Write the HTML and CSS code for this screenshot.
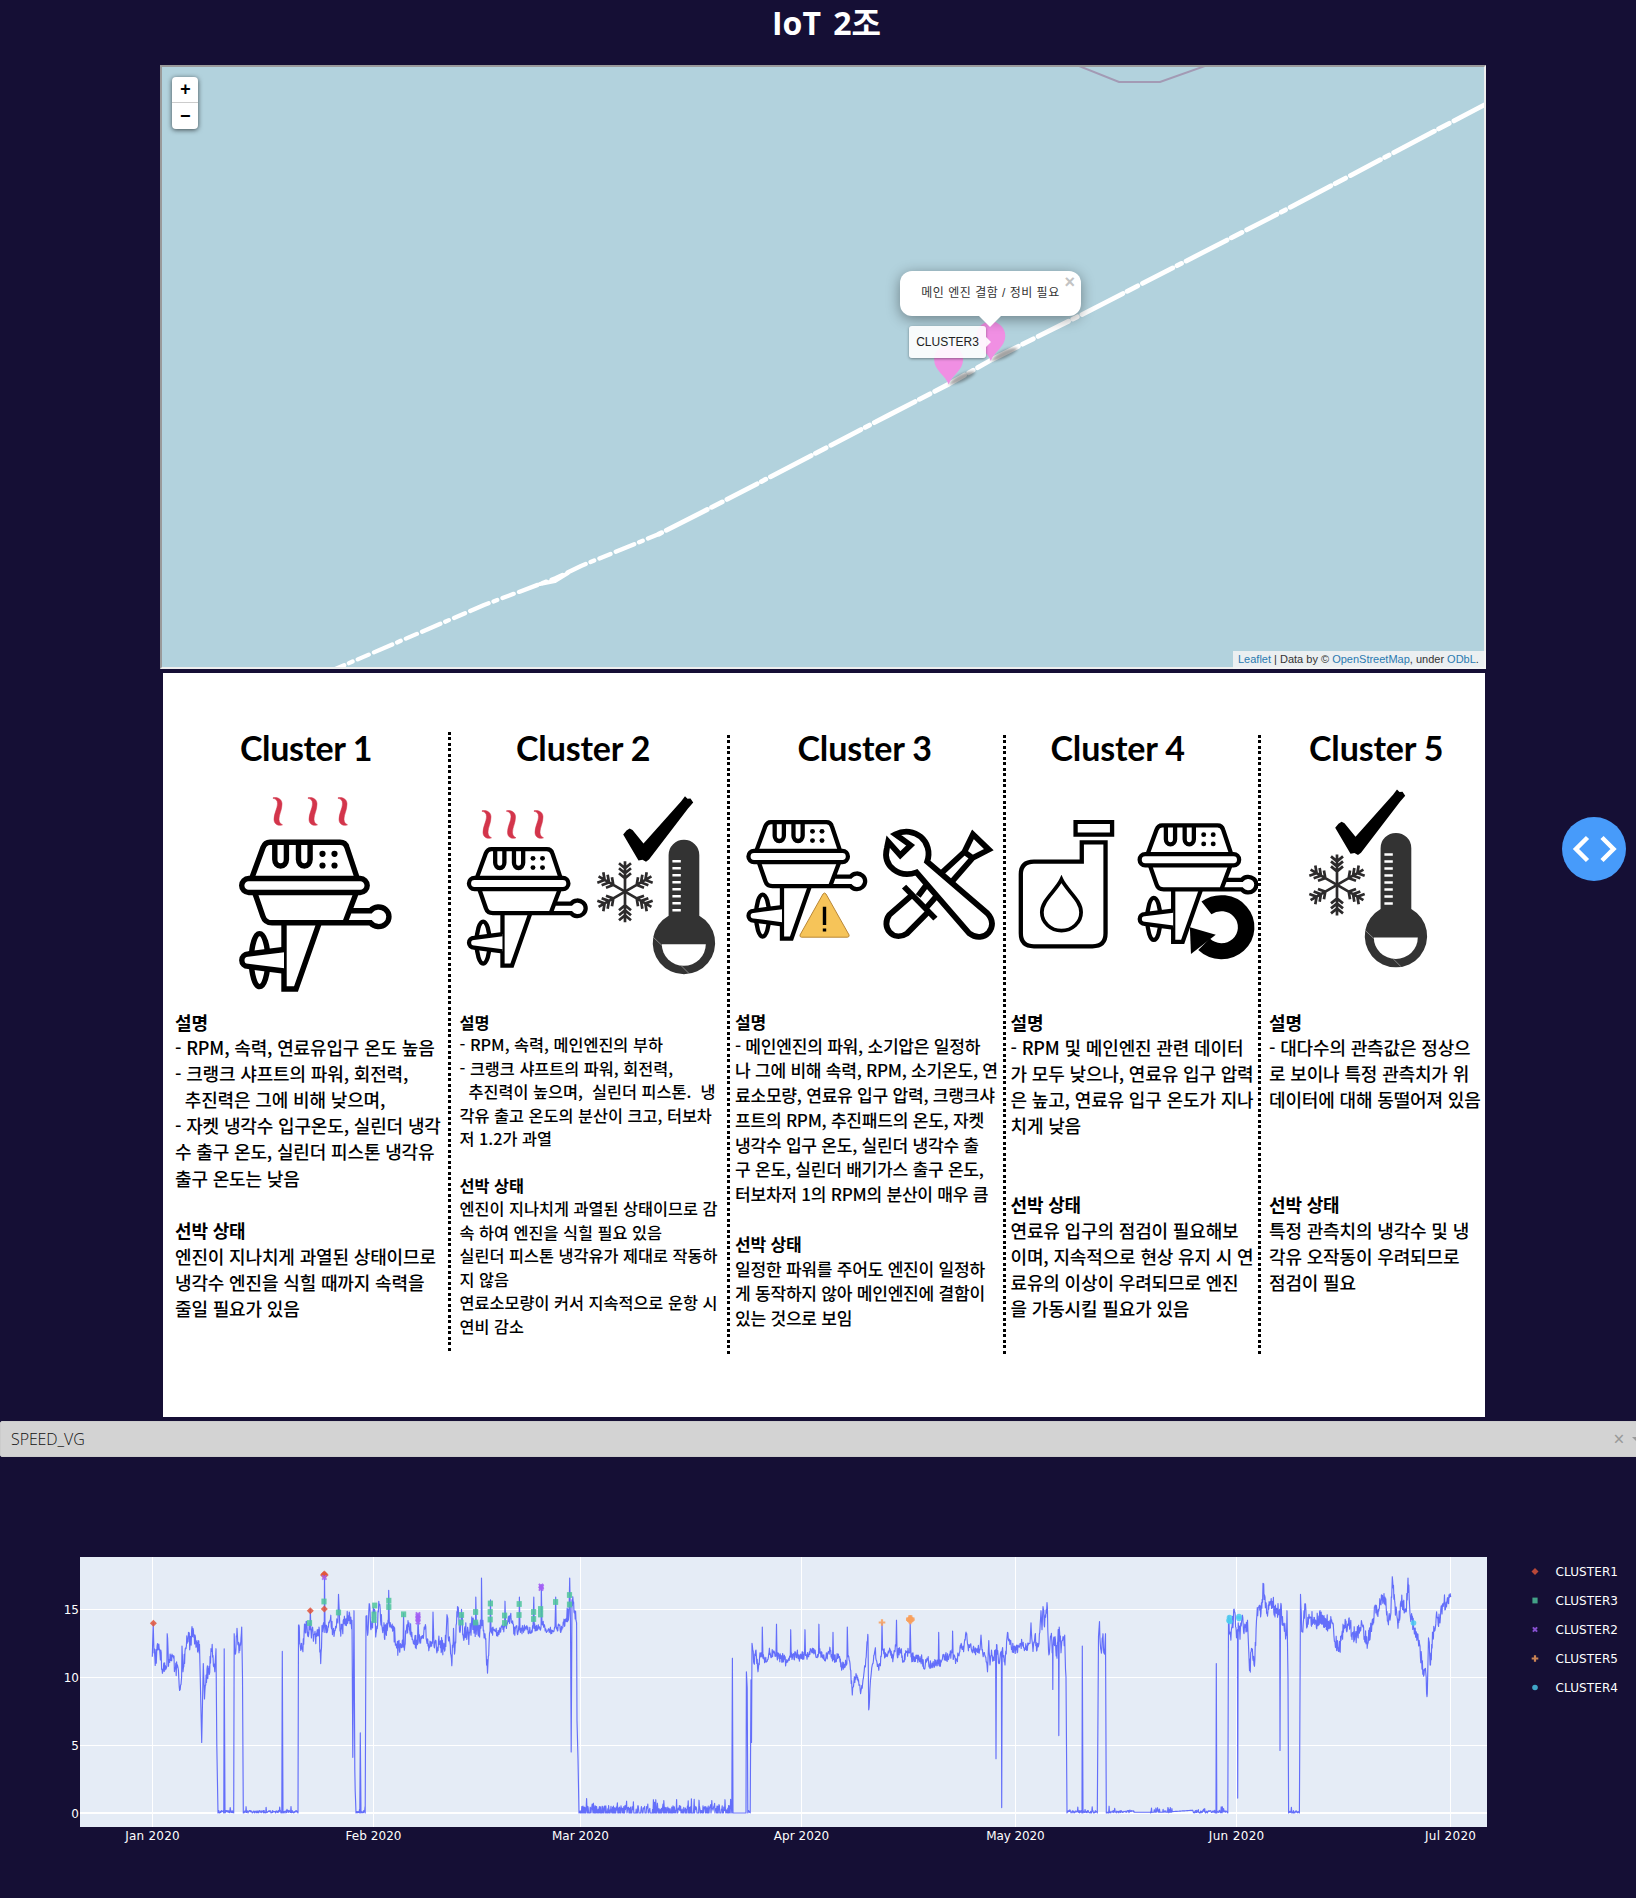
FILE: index.html
```html
<!DOCTYPE html>
<html lang="ko">
<head>
<meta charset="utf-8">
<title>IoT 2조</title>
<link rel="stylesheet" href="styles.css">
</head>
<body>
<svg class="defs" aria-hidden="true">
  <defs>
    <symbol id="motor" viewBox="0 0 152 153" overflow="visible">
      <g fill="none" stroke="#000" stroke-width="5.4">
        <path d="M13 38 L24 8 Q26 2.7 31 2.7 H101 Q106.500 2.700 108 8 L118 38"/>
        <rect x="2.700" y="39" width="125.500" height="14" rx="7"/>
        <path d="M35.800 3V20a5.800 6.500 0 0 0 11.600 0V3M59.500 3V20a5.800 6.500 0 0 0 11.600 0V3"/>
        <path d="M16 54 L24 77 Q26 83.300 33 83.300 H131.500 A10.300 9.800 0 1 0 131.500 71.300 H111 M117 54 L106 83"/>
        <ellipse cx="20.600" cy="120.600" rx="8.300" ry="26.500"/>
        <path d="M45 84V149.500H57L80 84"/>
        <path d="M45 110L9 114.500a6.200 6.200 0 0 0 0 12.400L45 131.500" fill="#fff"/>
      </g>
      <circle cx="83.500" cy="14.300" r="3.100"/><circle cx="95.500" cy="14.300" r="3.100"/>
      <circle cx="83.500" cy="26" r="3.100"/><circle cx="95.500" cy="26" r="3.100"/>
    </symbol>
    <path id="steam" fill="#d3354b" stroke="#d3354b" stroke-width=".5" d="M0 .5C3-.5 9 1 9 6.500C9 13 6 17 6 22C6 25 7.500 26.500 9.500 27.500C6 29 1 27.500 1 22C1 16 4.500 11 4.500 6.500C4.500 3 3 1.500 0 1Z"/>
    <g id="arm" fill="none" stroke="#2c2a2b" stroke-width="2.700">
      <path d="M0 0V-30.500M-6-18.500L0-13.500L6-18.500M-6-23.500L0-18.500L6-23.500M-6-28.500L0-23.500L6-28.500"/>
    </g>
    <g id="cooling">
      <path d="M623.200 834.500L626.500 830.500L629.600 828.500L632.500 830L643.500 843.500L681 801.500L685 796.200L687.500 798.800L690.500 798.500L693.200 802.500L688 808.500L649 859.500L646 861.800L642.500 859.800L638.500 860.500Z"/>
      <g transform="translate(625 891.700)">
        <use href="#arm"/><use href="#arm" transform="rotate(60)"/><use href="#arm" transform="rotate(120)"/>
        <use href="#arm" transform="rotate(180)"/><use href="#arm" transform="rotate(240)"/><use href="#arm" transform="rotate(300)"/>
      </g>
      <path fill="#333" d="M668.600 855A15.350 15.350 0 0 1 699.300 855V915.800A31.200 31.200 0 1 1 668.600 915.800Z"/>
      <path fill="#fff" d="M661.800 944.200H705.800A22 21.600 0 0 1 661.800 944.200Z"/>
      <path stroke="#fff" stroke-width="8.400" stroke-dasharray="2.600 4.400" d="M676.600 860V913"/>
      <path stroke="#bbb" stroke-width=".6" d="M653 937L662 945.500M681.500 966L689 973.500"/>
    </g>
    <g id="pin">
      <path class="pin-shadow" d="M0 0C5-8 16-14 26-13C30-11 12 1 0 0Z"/>
      <path fill="#f08fe3" d="M0 0C-3-9-14.500-14-14.500-25A14.500 14.500 0 0 1 14.500-25C14.500-14 3-9 0 0Z"/>
    </g>
  </defs>
</svg>

<main class="page">
  <h1 class="title">IoT 2조</h1>

  <section class="map">
    <svg class="map-layer" viewBox="162 67 1322 600">
      <path fill="none" stroke="#a39ab4" stroke-width="2" d="M1079 66L1119 82H1160L1205 66"/>
      <g fill="none" stroke="#fff" stroke-linecap="round" stroke-linejoin="round">
        <path class="route" d="M1484 105L1270 218L1081 315L992 359.500L949 384L889 415L726 500L659 534"/>
        <path class="route sparse" d="M659 534L581 566L556 578L484 605L333 670"/>
        <path stroke-width="4" d="M540 584L555 581L568 573"/>
      </g>
      <use href="#pin" x="948.600" y="384.500"/>
      <use href="#pin" x="990.800" y="361"/>
    </svg>
    <div class="zoom"><span>+</span><span>−</span></div>
    <div class="popup">메인 엔진 결함 / 정비 필요<span class="popup-close">×</span></div>
    <div class="tooltip">CLUSTER3</div>
    <div class="attribution"><a>Leaflet</a> | Data by © <a>OpenStreetMap</a>, under <a>ODbL</a>.</div>
  </section>

  <section class="clusters">
    <article class="cluster c1">
      <h2>Cluster 1</h2>
      <svg class="art" viewBox="163 770 285 230">
        <use href="#steam" x="273" y="797.300"/><use href="#steam" x="308" y="797.300"/><use href="#steam" x="338" y="797.300"/>
        <use href="#motor" x="239" y="839.500" width="152" height="153"/>
      </svg>
      <div class="text">
        <h3>설명</h3>
        <p>- RPM, 속력, 연료유입구 온도 높음
- 크랭크 샤프트의 파워, 회전력,
  추진력은 그에 비해 낮으며,
- 자켓 냉각수 입구온도, 실린더 냉각
수 출구 온도, 실린더 피스톤 냉각유
출구 온도는 낮음</p>
        <h3>선박 상태</h3>
        <p>엔진이 지나치게 과열된 상태이므로
냉각수 엔진을 식힐 때까지 속력을
줄일 필요가 있음</p>
      </div>
    </article>
    <i class="divider"></i>
    <article class="cluster c2">
      <h2>Cluster 2</h2>
      <svg class="art" viewBox="451 770 275.500 230">
        <use href="#steam" x="482" y="810.300"/><use href="#steam" x="506.500" y="810.300"/><use href="#steam" x="534" y="810.300"/>
        <use href="#motor" x="466.800" y="847" width="120.500" height="121.300"/>
        <use href="#cooling"/>
      </svg>
      <div class="text">
        <h3>설명</h3>
        <p>- RPM, 속력, 메인엔진의 부하
- 크랭크 샤프트의 파워, 회전력,
  추진력이 높으며,  실린더 피스톤.  냉
각유 출고 온도의 분산이 크고, 터보차
저 1.2가 과열</p>
        <h3>선박 상태</h3>
        <p>엔진이 지나치게 과열된 상태이므로 감
속 하여 엔진을 식힐 필요 있음
실린더 피스톤 냉각유가 제대로 작동하
지 않음
연료소모량이 커서 지속적으로 운항 시
연비 감소</p>
      </div>
    </article>
    <i class="divider low"></i>
    <article class="cluster c3">
      <h2>Cluster 3</h2>
      <svg class="art" viewBox="729.500 770 273 230">
        <use href="#motor" x="745.800" y="820" width="120.500" height="121.300"/>
        <path fill="#f6c459" stroke="#b98736" stroke-linejoin="round" d="M822.500 894Q824 892 825.500 894L848.600 935Q849 937 847 937.200H801Q799 937 799.500 935Z"/>
        <path d="M822.300 906.700h3.400v18.400h-3.400zM822.300 928.500h3.400v3h-3.400z"/>
        <g transform="translate(720 700) scale(.3444 .3333)" fill="none" stroke="#000" stroke-width="17">
          <path d="M708 456L733 403L779 449L732 474ZM708 456L641 520M732 474L672 545"/>
          <path d="M600 552L574 588M626 590L597 624"/>
          <path d="M555 586L490 645C465 680 500 728 542 700L603 636"/>
          <path d="M533 560L624 656"/>
          <path fill="#fff" d="M508 403C562 375 620 425 600 485L775 640C812 680 765 734 722 700L569 517C520 535 470 500 483 445L487 425L522 466L552 436Z"/>
        </g>
      </svg>
      <div class="text">
        <h3>설명</h3>
        <p>- 메인엔진의 파워, 소기압은 일정하
나 그에 비해 속력, RPM, 소기온도, 연
료소모량, 연료유 입구 압력, 크랭크샤
프트의 RPM, 추진패드의 온도, 자켓
냉각수 입구 온도, 실린더 냉각수 출
구 온도, 실린더 배기가스 출구 온도,
터보차저 1의 RPM의 분산이 매우 큼</p>
        <h3>선박 상태</h3>
        <p>일정한 파워를 주어도 엔진이 일정하
게 동작하지 않아 메인엔진에 결함이
있는 것으로 보임</p>
      </div>
    </article>
    <i class="divider low"></i>
    <article class="cluster c4">
      <h2>Cluster 4</h2>
      <svg class="art" viewBox="1005.500 770 252.500 230">
        <use href="#motor" x="1137" y="823.300" width="120.500" height="121.300"/>
        <g transform="translate(720 700) scale(.3444 .3333)" fill="none" stroke="#000" stroke-width="12.500">
          <path d="M1031 366H1137V404H1031ZM1049 485H910Q872 485 872 523V700Q872 739 910 739H1080Q1118 739 1118 700V427H1049Z"/>
          <path stroke-width="11" d="M990 538C975 572 933 600 933 637A57 55 0 0 0 1047 637C1047 600 1005 572 990 538Z"/>
          <path stroke-width="48" d="M1411 624A72 72 0 1 1 1404 733"/>
          <path fill="#000" stroke="none" d="M1363 682L1438 704L1366 762Z"/>
        </g>
      </svg>
      <div class="text">
        <h3>설명</h3>
        <p>- RPM 및 메인엔진 관련 데이터
가 모두 낮으나, 연료유 입구 압력
은 높고, 연료유 입구 온도가 지나
치게 낮음</p>
        <h3>선박 상태</h3>
        <p>연료유 입구의 점검이 필요해보
이며, 지속적으로 현상 유지 시 연
료유의 이상이 우려되므로 엔진
을 가동시킬 필요가 있음</p>
      </div>
    </article>
    <i class="divider low"></i>
    <article class="cluster c5">
      <h2>Cluster 5</h2>
      <svg class="art" viewBox="1261 770 224 230">
        <use href="#cooling" x="712" y="-6.800"/>
      </svg>
      <div class="text">
        <h3>설명</h3>
        <p>- 대다수의 관측값은 정상으
로 보이나 특정 관측치가 위
데이터에 대해 동떨어져 있음</p>
        <h3>선박 상태</h3>
        <p>특정 관측치의 냉각수 및 냉
각유 오작동이 우려되므로
점검이 필요</p>
      </div>
    </article>
  </section>

  <div class="select">
    <span class="select-value">SPEED_VG</span>
    <span class="select-clear">×</span>
    <span class="select-arrow"></span>
  </div>

  <svg class="chart" id="chart" viewBox="0 1457 1636 441">
    <rect x="80" y="1557" width="1407" height="270" fill="#e5ecf6"/>
    <g id="grid"></g>
    <path id="trace"/>
    <g id="points"></g>
    <g id="labels"></g>
  </svg>
</main>

<button class="debug" aria-label="debug">
  <svg viewBox="0 0 64 64"><path d="M25.500 20.500L14 32L25.500 43.500M40 20.500L51.500 32L40 43.500"/></svg>
</button>
<script src="chart.js"></script>
</body>
</html>
```
FILE: styles.css
```css
html, body { margin: 0; padding: 0; }
body {
  background: #150f35;
  overflow: hidden;
  font-family: "Noto Sans", "Noto Sans CJK KR", sans-serif;
}
.defs { position: absolute; width: 0; height: 0; }
.page { width: 1653px; height: 1898px; display: flex; flex-direction: column; }

.title {
  margin: 0;
  height: 65px;
  font: 700 32px/46px "Open Sans", "Noto Sans CJK KR", sans-serif;
  word-spacing: 4px;
  color: #fff;
  text-align: center;
}

/* Map */
.map {
  position: relative;
  box-sizing: border-box;
  width: 1326px;
  height: 604px;
  margin-left: 160px;
  border: 2px solid;
  border-color: #9a9a9a #eee #eee #9a9a9a;
  background: #b2d2dd;
  font-family: "Liberation Sans", "Noto Sans CJK KR", sans-serif;
}
.map-layer { display: block; width: 1322px; height: 600px; }
.route { stroke-width: 4.8; stroke-dasharray: 34 5.3 12 4.8 46 5.2 5 4.8; }
.route.sparse { stroke-width: 4.3; stroke-dasharray: 12 5.6 4 5.200 20 5.6; }
.pin-shadow { fill: #333; opacity: .45; filter: blur(1.500px); }
.zoom {
  position: absolute;
  left: 10px;
  top: 10px;
  width: 26px;
  background: #fff;
  border-radius: 4px;
  box-shadow: 0 1px 5px rgba(0, 0, 0, .65);
}
.zoom span {
  display: block;
  box-sizing: border-box;
  height: 26px;
  padding-left: 1px;
  font: bold 18px/28px "Liberation Mono", monospace;
  text-align: center;
  color: #000;
}
.zoom span:first-child { border-bottom: 1px solid #ccc; line-height: 27px; }
.popup {
  position: absolute;
  left: 738px;
  top: 204px;
  width: 181px;
  height: 45px;
  border-radius: 12px;
  background: #fff;
  box-shadow: 0 3px 14px rgba(0, 0, 0, .4);
  color: #333;
  font-size: 12px;
  line-height: 45px;
  letter-spacing: .5px;
  text-align: center;
}
.popup::after {
  content: "";
  position: absolute;
  left: 79px;
  top: 44.500px;
  border: 11.500px solid transparent;
  border-top-color: #fff;
  border-bottom: 0;
}
.popup-close {
  position: absolute;
  right: 6px;
  top: 3px;
  font: bold 18px/17px "Liberation Sans", sans-serif;
  letter-spacing: 0;
  color: #c3c3c3;
}
.tooltip {
  position: absolute;
  left: 747px;
  top: 259px;
  width: 77px;
  height: 32px;
  border-radius: 3px;
  background: rgba(255, 255, 255, .9);
  box-shadow: 0 1px 3px rgba(0, 0, 0, .4);
  color: #222;
  font-size: 12px;
  line-height: 32px;
  text-align: center;
}
.tooltip::after {
  content: "";
  position: absolute;
  left: 77px;
  top: 11px;
  border: 5px solid transparent;
  border-left-color: rgba(255, 255, 255, .9);
  border-right: 0;
}
.attribution {
  position: absolute;
  right: -2px;
  bottom: -2px;
  width: 243px;
  padding-left: 5px;
  padding-right: 5px;
  height: 18px;
  line-height: 16px;
  background: rgba(245, 245, 245, .85);
  font-size: 11px;
  color: #333;
  white-space: nowrap;
}
.attribution a { color: #2a7ab0; }

/* Cluster descriptions */
.clusters {
  display: grid;
  grid-template-columns: 285px 3px 275.500px 3px 273px 3px 252.500px 3px 224px;
  width: 1322px;
  height: 744px;
  margin: 4px 0 4px 163px;
  background: #fff;
  color: #000;
  overflow: hidden;
}
.cluster { min-width: 0; --size: 18px; --row: 26.150px; --track: -.15px; }
.cluster h2 {
  margin: 0;
  height: 97px;
  padding-top: 53px;
  box-sizing: border-box;
  font: 700 34px/44px Lato, sans-serif;
  letter-spacing: -.15px;
  white-space: nowrap;
}
.art { display: block; width: 100%; height: 230px; overflow: visible; }
.text {
  padding-top: 9px;
  font-family: "Noto Sans CJK KR", sans-serif;
  font-size: var(--size);
  line-height: var(--row);
  letter-spacing: var(--track);
}
.text h3 { margin: 0; font-size: inherit; font-weight: 700; }
.text p { margin: 0 0 var(--row); white-space: pre; font-weight: 500; }
.text p:first-of-type { margin-top: -1.300px; }
.c1 h2 { padding-left: 77px; letter-spacing: -.4px; }
.c1 .text { padding-left: 12px; }
.c2 { --size: 16.300px; --row: 23.450px; --track: 0; }
.c2 h2 { padding-left: 65px; }
.c2 .text { padding: 11px 0 0 8.500px; }
.c3 { --size: 17.100px; --row: 24.800px; --track: -.27px; }
.c3 h2 { padding-left: 68px; }
.c3 .text { padding: 10px 0 0 5.500px; }
.c4 h2 { padding-left: 45px; }
.c4 .text { padding-left: 5px; }
.c4 p:first-of-type { margin-bottom: calc(var(--row) * 2); }
.c5 h2 { padding-left: 48px; }
.c5 .text { padding-left: 8px; }
.c5 p:first-of-type { margin-bottom: calc(var(--row) * 3); }
.divider {
  height: 620px;
  margin-top: 59px;
  background: repeating-linear-gradient(#000 0 2.800px, #fff 2.800px 5.500px);
}
.divider.low { margin-top: 62px; }

/* Column picker */
.select {
  box-sizing: border-box;
  height: 36px;
  flex: none;
  display: flex;
  align-items: center;
  padding: 0 10px;
  border: 1px solid #ccc;
  border-radius: 2px;
  background: #d3d3d3;
}
.select-value { flex: 1; font: 300 16px/34px "Open Sans", sans-serif; letter-spacing: -.1px; color: #111; }
.select-clear { width: 20px; text-align: center; font-size: 19px; line-height: 34px; color: #999; margin-right: 3px; }
.select-arrow { border: 5px solid transparent; border-top-color: #999; border-bottom: 0; }

/* Chart */
.chart { display: block; width: 1636px; height: 441px; flex: none; }
.chart text { font-family: "DejaVu Sans", sans-serif; font-size: 12px; fill: #fff; }
#trace { fill: none; stroke: #636efa; stroke-width: 1.150; stroke-linejoin: round; }

.debug {
  position: fixed;
  left: 1562px;
  top: 817px;
  width: 64px;
  height: 64px;
  padding: 0;
  border: 0;
  border-radius: 50%;
  background: #479bfa;
}
.debug svg { display: block; width: 64px; height: 64px; }
.debug path { fill: none; stroke: #fff; stroke-width: 4.500; }
```
FILE: chart.js
```js
const BASE = 1813, UNIT = 13.58;
const Y = v => BASE - v * UNIT;
const byId = id => document.getElementById(id);

// Vessel speed: x position, value pairs
const speed = `152.3 11.5 153.2 14 154 11.8 155.5 11.3 158 12 160 11.7 163 10.5 166 10.6 166.9 10.8 167.2 13.2 168.5 10.8 172 11.7 175 10.7 178 10.7
180.2 9.1 181.6 10 182 12.3 183 10.4 186 12.1 188.5 13.3 190 12.3 193 13.6 196 12.2 199.5 12.4 201.7 5.2 203.3 11 204.5 8.4 207 10.6 209.3 10.2 211 12.1 213 11.6
214.8 10.4 216 12.1 216.8 5 218 0 223.8 0 224.2 12.1 225 0 233.7 0 234.2 13.2 235.5 11.7 237 13.6 239 11.8 241.7 13.7 242.5 10 243.3 0 281.8 0 282.3 11.9 283 0
298 0 298.5 13.8 300 12.5 302.5 12.1 305 13.9 308 13.3 310 13.5 310.3 15 311 13.4 313 13.3 316 13 319 13.7 320.7 11 322 13.8 324.2 13.3 324.5 17.6 325 14 326 13.3 330 14.2
334 13 337.9 14 338.5 16.1 340 13.4 346 14.3 352 14.2 352.8 4.1 354 14.9 354.8 3.2 356 0 359.8 0 360.3 5.9 361 0 365.2 0 366 14.5 368 13.3 369.5 15.4 371 13.5
374.5 15 376 13.2 379 15.3 382 13.8 386 13.2 388.3 14 388.7 16.4 389.4 13.9 391 13.7 395 13 397 12.2 400 12.1 403 12.2 403.6 14.7 404 12.4 406 13.2 409 14 413 12.7 417.5 12.4 418 14.5
419 12.5 421 13 425 13.7 428 12.3 432.5 12.5 433 14.8 434 12.3 436.5 12 440 12.6 443 12.1 446 12.9 447 14.6 449 12.8 452 11.1 453.5 13.6 454.5 11.7 457.5 15.2
460 13.3 461.5 15 463 13.2 466 13.5 469 12.9 472 14 475.5 13.5 475.8 15.9 476.4 13.8 480 13.5 481.3 14 481.5 17.3 482.1 13.8 485 13.2 487.5 10.3 490 13.4 490.5 15.7 491 13.4 497 13.3
501 13.6 504.6 13.7 505 15.6 505.6 13.8 511 14.4 514 13.4 519 13.5 519.4 15.9 520 13.5 527 13.5 533 13.6 533.8 15.9 534.3 13.6 540 13.5 541.1 13.8 541.3 16.8 542 13.9
546 13.5 551 13.4 555 13.7 555.7 15.9 556.2 13.6 562 13.6 566 14.3 569 14.8 569.7 17.3 570.5 14 571.2 4.5 572 15.7 574 14.8 576 14.2 576.6 14 577 6.8 578 4 579 0
731.8 0 732.4 11.4 733 0 746 0 746.4 10.4 747.2 9.2 747.8 0 750.2 0 751 9.8 751.5 5.2 752 12.5 754 11 756 12 758 10.4 760 11.8 762 11.5 762.3 13.7 763 11.4 766 11.2 769 11.8
776 11.7 776.5 13.9 777 11.5 784 11.4 786 11.1 790.3 11.5 790.7 13.5 791.2 11.5 797 11.7 799 11.5 804.5 11.7 805 13.5 805.5 11.6 812 11.8 818.5 11.7 818.9 13.9 819.4 11.8 826 11.5
829.5 12 832.5 11.2 833 13.3 833.5 11.3 838 11.5 842 10.8 846.9 11 847.3 13.7 848 11.5 850 11 852.3 8.7 854 9.7 856.5 10 859 9.4 861 9 863 9.8 865 10.8 868 13 868.7 7.6
870.5 9.8 873 11 875 12 878 10.8 880 10.9 881.5 11.7 882 14 882.6 12 886 11.6 890 12 893 11.3 896 12.3 896.5 14.2 897.1 11.7 901 12 903 11.1 906 11.9 909.7 11.8 910.2 14 911 11.5
918 11.3 922 11.3 924.5 10.6 927 11.4 930 10.9 935 11.1 938.3 11.2 938.7 13.3 939.2 11 944 11.5 948 11.5 952.3 11.8 952.6 13.4 953.2 11.3 957 11.3 960 12.2 964 12.2 966.3 13.2 968 12.3
974 12 980 12 981 13.1 982 12 985 11.6 987.5 10.4 988.8 12.7 990 10.9 991.5 12 993 11.2 995.6 12 996 4 996.5 12.4 999 11 1000.5 11.8 1001.4 11.9 1001.7 .4 1002.2 12 1005 10.9 1007.5 13.3
1012 12.2 1016 12 1022 12.5 1025 12.1 1030 12.5 1031 14 1033 11.9 1035 13.1 1037 12 1039 12.5 1041 14.9 1042 13.5 1043 15.2 1044.500 13.7 1047 15.5 1048.500 12 1051 13 1052.6 12.2 1052.8 9.1 1053 12.2 1055 13
1057 11.4 1058.500 13.5 1058.8 5.7 1059.2 13.7 1061 11.8 1064.7 13.1 1066 10 1067 0 1082 0 1082.3 12.3 1083 0 1097.3 0 1098.5 13 1099.500 14.1 1101 12 1103 13.2 1104.500 11.7 1105.500 13.2 1106.3 0
1216 0 1216.3 11 1216.8 0 1227.8 0 1228.5 14.2 1230.500 13.1 1234.8 14.8 1236.5 12.9 1237.4 13.5 1237.7 1.1 1238.2 14 1240 12.8 1242 14.4 1244 13.2 1247.5 14.2 1249.500 10.5 1252 12 1254.5 10.8
1256.5 14.2 1259 15.2 1261 14.7 1263.3 16.6 1265 15.9 1267.5 14.5 1270 15.3 1273 15.4 1276 14.8 1279.7 15 1280 4.6 1280.5 15 1284 13.8 1286.5 13.1 1287 14.9 1288 10 1288.6 0 1299.4 0 1300.5 16.1
1302 13.4 1305.5 15.4 1307 13.7 1310 14.4 1316 14.1 1322 14.4 1328 14 1332 14 1335 12.6 1339 12 1344 13.8 1350 13.8 1353 13.2 1357 13.1 1362 13.9 1367.5 12.4 1372 14 1375.5 15.3 1379 15 1382 15.7
1385 15.9 1388 14.1 1390.5 14.5 1392.3 17.4 1395 15.4 1398 13.6 1401 15.6 1406 14.8 1408 17.3 1410 14.7 1414 13.6 1417.5 12.8 1420 12.3 1422 10.6 1425 10.5 1427.3 8.8 1428.5 12.9 1430.5 10.9
1433 13.2 1437 14.4 1440 14 1442.5 15.4 1447 15.6 1450.7 15.9`.trim().split(/\s+/).map(Number);

let seed = 20200101;
const rand = () => (seed = (seed * 1664525 + 1013904223) >>> 0) / 4294967296;

// Readings while the vessel is stopped
const idle = x => {
  if (x > 733 && x < 746) return 0;
  if (x > 1134 && x < 1193) return x > 1150 && x < 1172 && rand() < .5 ? .4 * rand() : x > 1172 ? .1 + (x - 1172) * .005 : .06;
  const r = rand();
  if (x > 580 && x < 732) return r < .45 ? 0 : r > .95 ? .5 + rand() * .6 : .15 + rand() * .4;
  return r > .93 ? rand() * .5 : r * .2;
};
let d = "";
for (let i = 0; i < speed.length; i += 2) {
  const [x0, v0, x1, v1] = speed.slice(i, i + 4);
  d += (i ? "L" : "M") + x0 + " " + Y(v0).toFixed(1);
  if (x1 === undefined) break;
  if (x1 - x0 < 1.1 || Math.abs(v1 - v0) > 3.5) continue;
  const flat = v0 === 0 && v1 === 0;
  const calm = (x0 > 750 && x0 < 1040) || (x0 > 490 && x0 < 566) || x0 > 1443;
  for (let x = x0 + .4; x < x1 - .2; x += .4) {
    const t = (x - x0) / (x1 - x0);
    const v = flat ? idle(x) : v0 + (v1 - v0) * t + (rand() - .5) * (calm ? .7 : 1.25);
    d += "L" + x.toFixed(2) + " " + Y(v).toFixed(1);
  }
}
byId("trace").setAttribute("d", d);

const label = (x, y, text, anchor, length) =>
  `<text x="${x}" y="${y}" text-anchor="${anchor}"${length ? ` textLength="${length}"` : ""}>${text}</text>`;

const months = [["Jan", 152.5, 54.5], ["Feb", 373.5, 56], ["Mar", 580.5, 57], ["Apr", 801.5, 55.5], ["May", 1015.5, 58.5], ["Jun", 1236.5, 55.5], ["Jul", 1450.5, 51]];
let grid = "", labels = "";
for (const [name, x, w] of months) {
  grid += `<path stroke="#fff" d="M${x} 1557V1827"/>`;
  labels += label(x, 1840, name + " 2020", "middle", w);
}
for (const v of [0, 5, 10, 15]) {
  grid += `<path stroke="#fff" stroke-width="${v ? 1 : 2}" d="M80 ${Math.round(Y(v)) + (v ? .5 : 0)}H1487"/>`;
  labels += label(79, Y(v) + 4.5, v, "end");
}
byId("grid").innerHTML = grid;

const shapes = {
  diamond: ["#e2553a", "M-3.500 0L0-3.500L3.500 0L0 3.500Z"],
  square: ["#4fc69c", "M-2.600-2.900H2.600V2.900H-2.600Z"],
  x: ["#a35ff5", "M-2.800-1.600L-1.600-2.800L0-1.400L1.600-2.800L2.800-1.600L1.400 0L2.800 1.600L1.600 2.800L0 1.400L-1.600 2.800L-2.800 1.600L-1.400 0Z"],
  cross: ["#f9a05c", "M-3.300-1.100H-1.100V-3.300H1.100V-1.100H3.300V1.100H1.100V3.300H-1.100V1.100H-3.300Z"],
  circle: ["#4bcbee", "M-2.800 0A2.800 2.800 0 1 1 2.800 0A2.800 2.800 0 1 1-2.800 0Z"]
};
const mark = (kind, x, y, o = .85) =>
  `<path fill="${shapes[kind][0]}" opacity="${o}" transform="translate(${x} ${y})" d="${shapes[kind][1]}"/>`;
const events = {
  diamond: [153.4, 1623.3, 310.3, 1610.7, 324.3, 1609, 324.3, 1574, 323.5, 1575, 325.2, 1575],
  square: [309.5, 1623, 324, 1601.5, 338.5, 1612.5, 374.7, 1605.5, 374, 1614.5, 374, 1620, 388.8, 1600.7, 388.8, 1607, 403.6, 1614.3,
    461.5, 1615, 461, 1622.5, 475.6, 1612, 475.6, 1622.5, 490.4, 1603.5, 490.2, 1612, 490.2, 1619.5, 504.6, 1615.5, 504.6, 1623,
    519.2, 1604, 519, 1615, 533.6, 1612, 533.6, 1619, 540.6, 1609, 540.6, 1614.5, 555.6, 1602, 569.5, 1595, 569.5, 1604.5],
  x: [324.3, 1577.5, 418, 1614.5, 418, 1616, 418, 1618, 418, 1619.5, 418, 1622, 541, 1586, 541.5, 1587, 541, 1588.5],
  cross: [882, 1622.5, 910.3, 1618.5, 911.3, 1620, 909.3, 1620, 910.3, 1621, 911.3, 1618.5, 909.3, 1618.5],
  circle: [1229.5, 1617.5, 1229, 1620.5, 1230, 1621.500, 1239, 1616.5, 1239, 1618.500, 1413.5, 1623]
};
let points = "";
for (const kind in events)
  for (let i = 0; i < events[kind].length; i += 2) points += mark(kind, events[kind][i], events[kind][i + 1]);

[["CLUSTER1", "diamond"], ["CLUSTER3", "square"], ["CLUSTER2", "x"], ["CLUSTER5", "cross"], ["CLUSTER4", "circle"]].forEach(([name, kind], i) => {
  const y = 1571.5 + i * 29;
  points += mark(kind, 1535, y, .8);
  labels += label(1555.5, y + 4.3, name, "start", 62.5);
});
byId("points").innerHTML = points;
byId("labels").innerHTML = labels;
```
